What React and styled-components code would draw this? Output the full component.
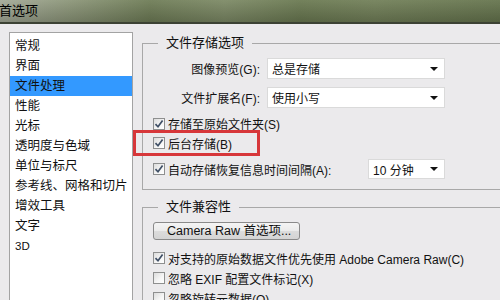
import React from 'react'
import styled, { createGlobalStyle } from 'styled-components'

const GlobalStyle = createGlobalStyle`
  html, body {
    margin: 0;
    padding: 0;
    width: 500px;
    height: 300px;
    overflow: hidden;
    background: #ebeaec;
  }
  body {
    font-family: "Liberation Sans", "Noto Sans CJK SC", sans-serif;
    font-size: 12px;
    color: #111;
  }
`

const Window = styled.div`
  width: 500px;
  height: 300px;
  display: flex;
  flex-direction: column;
  overflow: hidden;
`

const TitleBar = styled.div`
  height: 22px;
  flex-shrink: 0;
  display: flex;
  align-items: center;
  background:
    linear-gradient(to bottom, rgba(255,255,255,0.06), rgba(0,0,0,0.18)),
    linear-gradient(to right, #a4aa98 0%, #8c9679 14%, #6f7d57 30%, #7d8a66 45%, #6b7a52 60%, #728059 75%, #66754e 100%);
  border-bottom: 2px solid #3c4234;
  color: #000;
`

const TitleText = styled.span`
  margin-left: -1px;
  font-size: 13px;
  line-height: 16px;
`

const Body = styled.div`
  flex: 1;
  display: flex;
  align-items: flex-start;
  padding-left: 9px;
  gap: 9px;
`

const List = styled.ul`
  list-style: none;
  margin: 8px 0 0;
  padding: 3px 0 0;
  width: 122px;
  height: 300px;
  flex-shrink: 0;
  background: #fff;
  border: 1px solid #a3a3a3;
`

const Item = styled.li`
  height: 20px;
  line-height: 20px;
  padding-left: 5px;
  white-space: nowrap;
  background: ${p => (p.$active ? '#3399ff' : 'transparent')};
  font-size: ${p => (p.$latin ? '11.5px' : '12.5px')};
`

const Column = styled.div`
  flex: 1;
  margin-top: 11px;
  margin-right: -20px;
`

const Group = styled.fieldset`
  margin: 0 0 ${p => p.$mb || 0}px;
  padding: 0 0 ${p => p.$pb || 0}px 10px;
  border: none;
  border-top: 1px solid #a8a8a8;
  border-left: 1px solid #a8a8a8;
  border-bottom: ${p => (p.$closed ? '1px solid #a8a8a8' : 'none')};
  min-width: 0;
`

const Legend = styled.legend`
  margin-left: 5px;
  padding: 0 8px;
  font-size: 13px;
  line-height: 16px;
  height: 16px;
`

const Rows = styled.div`
  width: 292px;
  padding-top: 7px;
  display: flex;
  flex-direction: column;
`

const Row = styled.div`
  position: relative;
  display: flex;
  align-items: center;
  height: ${p => p.$h || 20}px;
  margin-top: ${p => p.$mt || 0}px;
`

const Label = styled.span`
  width: 107px;
  margin-right: 7px;
  text-align: right;
  white-space: nowrap;
`

const Select = styled.div`
  box-sizing: border-box;
  height: ${p => p.$h || 21}px;
  width: ${p => p.$w}px;
  margin-left: ${p => (p.$push ? 'auto' : '0')};
  background: #fff;
  border: 1px solid #dadada;
  display: flex;
  align-items: center;
  padding: 0 4px 0 4px;
`

const SelectText = styled.span`
  flex: 1;
  white-space: nowrap;
`

const Arrow = styled.span`
  width: 0;
  height: 0;
  margin-right: 2px;
  border-left: 4px solid transparent;
  border-right: 4px solid transparent;
  border-top: 4px solid #111;
`

const Box = styled.span`
  box-sizing: border-box;
  width: 12px;
  height: 12px;
  flex-shrink: 0;
  border: 1px solid #8e8f8f;
  background: linear-gradient(135deg, #dcdcdc 0%, #f6f6f6 60%, #ffffff 100%);
  display: flex;
  align-items: center;
  justify-content: center;
  margin-right: 3px;
`

const CheckText = styled.span`
  white-space: nowrap;
`

const Highlight = styled.div`
  position: absolute;
  left: -20px;
  top: -3px;
  width: 127px;
  height: 26px;
  box-sizing: border-box;
  border: 3px solid #d7373a;
  pointer-events: none;
`

const Button = styled.button`
  box-sizing: border-box;
  height: 18px;
  width: 147px;
  padding: 0 0 0 13px;
  text-align: left;
  font: inherit;
  font-size: 12.5px;
  line-height: 16px;
  color: #111;
  border: 1px solid #8a8a8a;
  border-radius: 3px;
  background: linear-gradient(to bottom, #f4f4f4 0%, #ebebeb 50%, #dcdcdc 51%, #d4d4d4 100%);
`

const Check = ({ checked, children }) => (
  <>
    <Box>
      {checked && (
        <svg width="10" height="10" viewBox="0 0 10 10">
          <path d="M1.5 5.2 L4 7.8 L8.6 1.6" fill="none" stroke="#3f4f66" strokeWidth="1.7" />
        </svg>
      )}
    </Box>
    <CheckText>{children}</CheckText>
  </>
)

const items = ['常规', '界面', '文件处理', '性能', '光标', '透明度与色域', '单位与标尺', '参考线、网格和切片', '增效工具', '文字', '3D']

export default function App() {
  return (
    <Window>
      <GlobalStyle />
      <TitleBar>
        <TitleText>首选项</TitleText>
      </TitleBar>
      <Body>
        <List>
          {items.map(name => (
            <Item key={name} $active={name === '文件处理'} $latin={name === '3D'}>
              {name}
            </Item>
          ))}
        </List>
        <Column>
          <Group $closed $pb={10} $mb={9}>
            <Legend>文件存储选项</Legend>
            <Rows>
              <Row $h={21}>
                <Label>图像预览(G):</Label>
                <Select $w={178}>
                  <SelectText>总是存储</SelectText>
                  <Arrow />
                </Select>
              </Row>
              <Row $h={21} $mt={8}>
                <Label>文件扩展名(F):</Label>
                <Select $w={178}>
                  <SelectText>使用小写</SelectText>
                  <Arrow />
                </Select>
              </Row>
              <Row $h={19} $mt={6}>
                <Check checked>存储至原始文件夹(S)</Check>
              </Row>
              <Row $h={20}>
                <Check checked>后台存储(B)</Check>
                <Highlight />
              </Row>
              <Row $h={20} $mt={6}>
                <Check checked>自动存储恢复信息时间间隔(A):</Check>
                <Select $w={77} $h={20} $push>
                  <SelectText>10 分钟</SelectText>
                  <Arrow />
                </Select>
              </Row>
            </Rows>
          </Group>
          <Group>
            <Legend>文件兼容性</Legend>
            <Rows>
              <Row $h={18}>
                <Button>Camera Raw 首选项...</Button>
              </Row>
              <Row $h={20} $mt={8}>
                <Check checked>对支持的原始数据文件优先使用 Adobe Camera Raw(C)</Check>
              </Row>
              <Row $h={20}>
                <Check>忽略 EXIF 配置文件标记(X)</Check>
              </Row>
              <Row $h={20}>
                <Check>忽略旋转元数据(O)</Check>
              </Row>
            </Rows>
          </Group>
        </Column>
      </Body>
    </Window>
  )
}
